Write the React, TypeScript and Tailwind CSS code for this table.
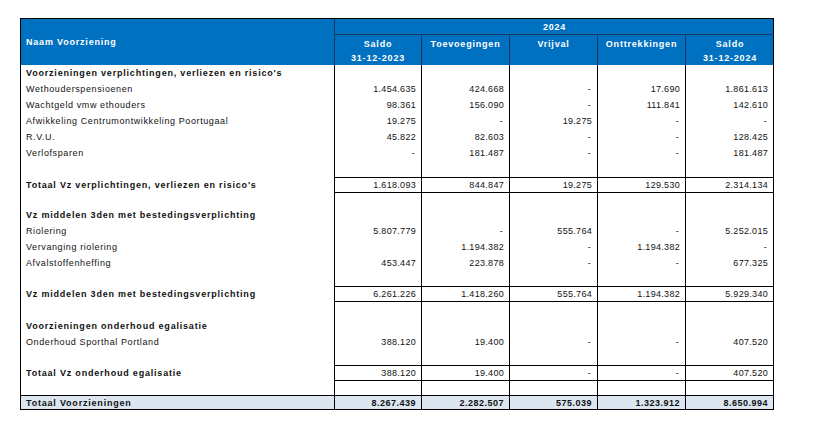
import React from "react";

type Row = {
  label?: string;
  values?: string[];
  kind?: "item" | "section" | "total" | "empty" | "grand";
  h: number;
};

const rows: Row[] = [
  { label: "Voorzieningen verplichtingen, verliezen en risico's", kind: "section", h: 16 },
  { label: "Wethouderspensioenen", values: ["1.454.635", "424.668", "-", "17.690", "1.861.613"], h: 16 },
  { label: "Wachtgeld vmw ethouders", values: ["98.361", "156.090", "-", "111.841", "142.610"], h: 16 },
  { label: "Afwikkeling Centrumontwikkeling Poortugaal", values: ["19.275", "-", "19.275", "-", "-"], h: 16 },
  { label: "R.V.U.", values: ["45.822", "82.603", "-", "-", "128.425"], h: 16 },
  { label: "Verlofsparen", values: ["-", "181.487", "-", "-", "181.487"], h: 16 },
  { kind: "empty", h: 16 },
  { label: "Totaal Vz verplichtingen, verliezen en risico's", values: ["1.618.093", "844.847", "19.275", "129.530", "2.314.134"], kind: "total", h: 16 },
  { kind: "empty", h: 14 },
  { label: "Vz middelen 3den met bestedingsverplichting", kind: "section", h: 16 },
  { label: "Riolering", values: ["5.807.779", "-", "555.764", "-", "5.252.015"], h: 16 },
  { label: "Vervanging riolering", values: ["", "1.194.382", "-", "1.194.382", "-"], h: 16 },
  { label: "Afvalstoffenheffing", values: ["453.447", "223.878", "-", "-", "677.325"], h: 16 },
  { kind: "empty", h: 15 },
  { label: "Vz middelen 3den met bestedingsverplichting", values: ["6.261.226", "1.418.260", "555.764", "1.194.382", "5.929.340"], kind: "total", h: 16 },
  { kind: "empty", h: 16 },
  { label: "Voorzieningen onderhoud egalisatie", kind: "section", h: 16 },
  { label: "Onderhoud Sporthal Portland", values: ["388.120", "19.400", "-", "-", "407.520"], h: 16 },
  { kind: "empty", h: 15 },
  { label: "Totaal Vz onderhoud egalisatie", values: ["388.120", "19.400", "-", "-", "407.520"], kind: "total", h: 16 },
  { kind: "empty", h: 14 },
  { label: "Totaal Voorzieningen", values: ["8.267.439", "2.282.507", "575.039", "1.323.912", "8.650.994"], kind: "grand", h: 15 },
];

const grid = "grid grid-cols-[314px_87px_88px_88px_88px_88px]";
const heights: Record<number, string> = { 14: "h-[14px]", 15: "h-[15px]", 16: "h-[16px]" };

const TableRow = ({ row }: { row: Row }) => {
  const kind = row.kind ?? "item";
  const bold = kind !== "item" && kind !== "empty";
  const vals = row.values ?? ["", "", "", "", ""];
  const grand = kind === "grand";
  return (
    <div className={`${grid} ${heights[row.h]} ${grand ? "bg-[#dce6f1] border-y border-black" : ""}`}>
      <div
        className={`flex items-center pl-[5px] border-r border-black whitespace-nowrap ${
          bold ? "font-bold tracking-[0.8px]" : "tracking-[0.6px]"
        }`}
      >
        {row.label}
      </div>
      {vals.map((v, i) => (
        <div
          key={i}
          className={`flex items-center justify-end border-r border-black ${
            v === "-" ? "pr-[6px]" : "pr-[5px]"
          } ${kind === "total" ? "border-y" : ""} ${
            grand ? "font-bold tracking-[0.5px]" : "tracking-[0.3px]"
          }`}
        >
          {v}
        </div>
      ))}
    </div>
  );
};

const App = () => {
  const cols = [
    { title: "Saldo", sub: "31-12-2023" },
    { title: "Toevoegingen" },
    { title: "Vrijval" },
    { title: "Onttrekkingen" },
    { title: "Saldo", sub: "31-12-2024" },
  ];
  return (
    <div className="w-[814px] h-[424px] bg-white pt-[18px] pl-[20px] font-['Liberation_Sans',Arial,sans-serif] text-[9px] leading-[12px] text-[#111]">
      <div className="w-[754px] border-l border-r border-black">
        <div className="grid grid-cols-[314px_439px] grid-rows-[16px_30px] bg-[#0070c0] text-white font-bold tracking-[0.8px] border-t border-black">
          <div className="row-span-2 flex items-center pl-[5px] border-r border-[#17375e]">
            Naam Voorziening
          </div>
          <div className="flex items-center justify-center border-b border-[#17375e]">2024</div>
          <div className="grid grid-cols-[87px_88px_88px_88px_88px]">
            {cols.map((c, i) => (
              <div
                key={i}
                className={`flex flex-col items-center pt-[2px] leading-[14px] ${
                  i < 4 ? "border-r border-[#17375e]" : ""
                }`}
              >
                <span>{c.title}</span>
                {c.sub && <span>{c.sub}</span>}
              </div>
            ))}
          </div>
        </div>
        {rows.map((r, i) => (
          <TableRow key={i} row={r} />
        ))}
      </div>
    </div>
  );
};

export default App;
